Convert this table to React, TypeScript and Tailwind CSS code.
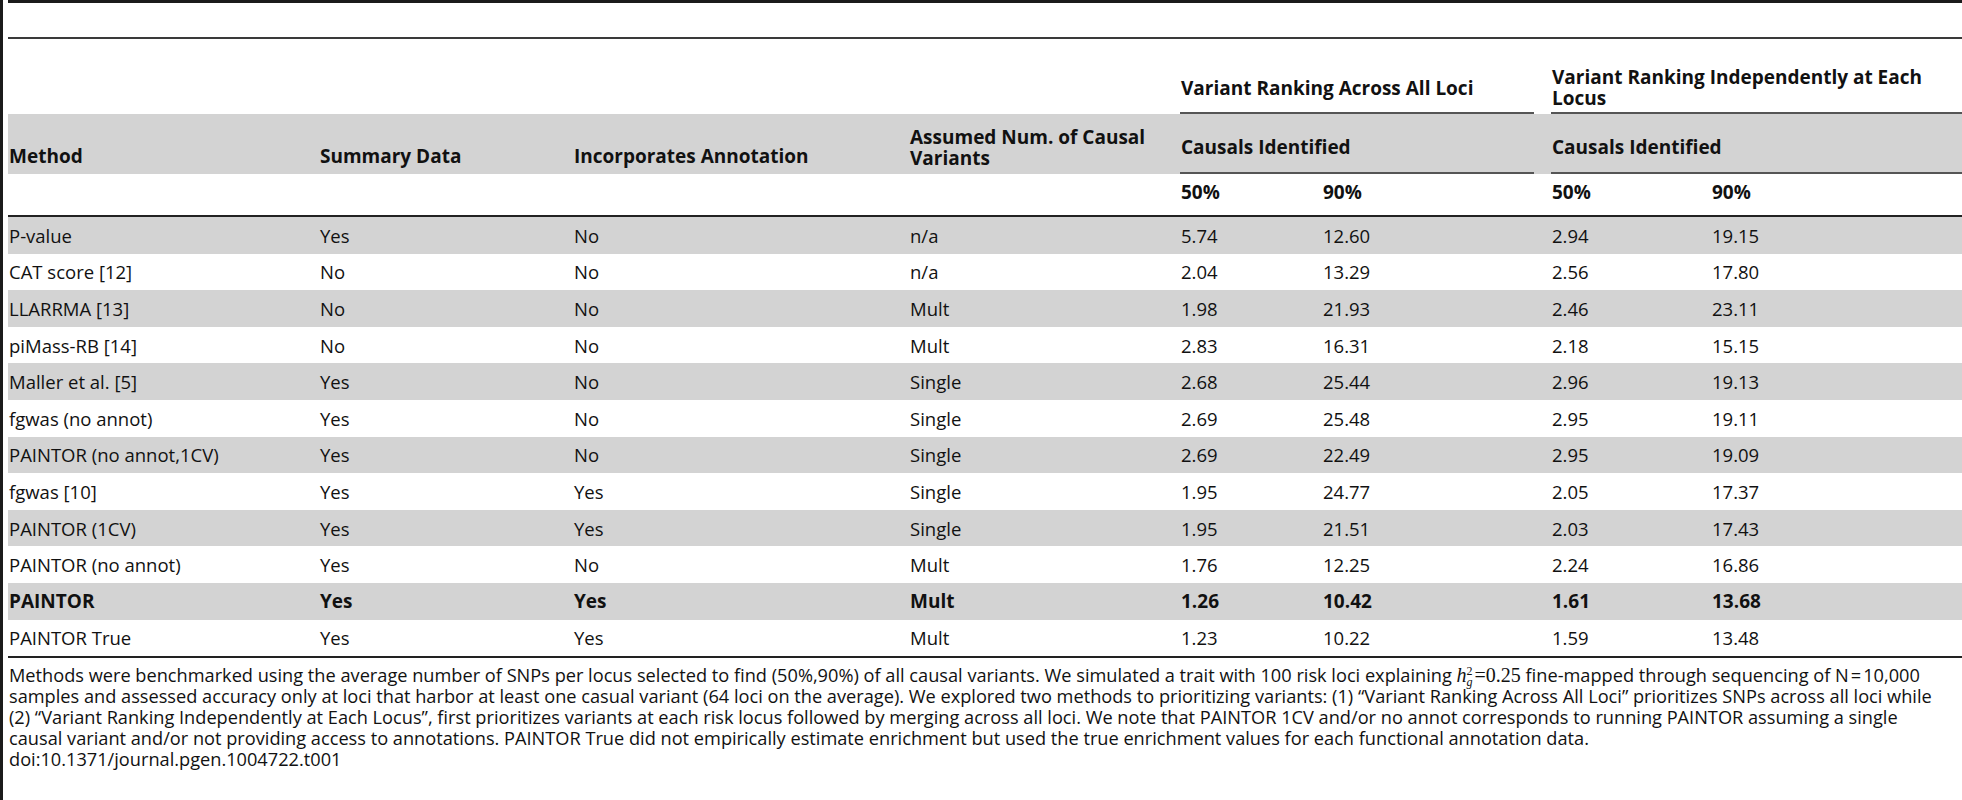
import clsx from 'clsx';

type Row = {
  cells: string[];
  bold?: boolean;
};

const COLS = [
  'w-[311px]',
  'w-[254px]',
  'w-[336px]',
  'w-[271px]',
  'w-[142px]',
  'w-[229px]',
  'w-[160px]',
  'flex-1',
];

const rows: Row[] = [
  { cells: ['P-value', 'Yes', 'No', 'n/a', '5.74', '12.60', '2.94', '19.15'] },
  { cells: ['CAT score [12]', 'No', 'No', 'n/a', '2.04', '13.29', '2.56', '17.80'] },
  { cells: ['LLARRMA [13]', 'No', 'No', 'Mult', '1.98', '21.93', '2.46', '23.11'] },
  { cells: ['piMass-RB [14]', 'No', 'No', 'Mult', '2.83', '16.31', '2.18', '15.15'] },
  { cells: ['Maller et al. [5]', 'Yes', 'No', 'Single', '2.68', '25.44', '2.96', '19.13'] },
  { cells: ['fgwas (no annot)', 'Yes', 'No', 'Single', '2.69', '25.48', '2.95', '19.11'] },
  { cells: ['PAINTOR (no annot,1CV)', 'Yes', 'No', 'Single', '2.69', '22.49', '2.95', '19.09'] },
  { cells: ['fgwas [10]', 'Yes', 'Yes', 'Single', '1.95', '24.77', '2.05', '17.37'] },
  { cells: ['PAINTOR (1CV)', 'Yes', 'Yes', 'Single', '1.95', '21.51', '2.03', '17.43'] },
  { cells: ['PAINTOR (no annot)', 'Yes', 'No', 'Mult', '1.76', '12.25', '2.24', '16.86'] },
  { cells: ['PAINTOR', 'Yes', 'Yes', 'Mult', '1.26', '10.42', '1.61', '13.68'], bold: true },
  { cells: ['PAINTOR True', 'Yes', 'Yes', 'Mult', '1.23', '10.22', '1.59', '13.48'] },
];

function DataRow({ row, shaded }: { row: Row; shaded: boolean }) {
  return (
    <div
      className={clsx(
        'flex h-[36.6px] items-center',
        shaded && 'bg-[#d3d3d3]',
        row.bold && 'text-[19px] font-bold',
      )}
    >
      {row.cells.map((cell, i) => (
        <div key={i} className={clsx(COLS[i], 'whitespace-nowrap pl-[1px]')}>
          {cell}
        </div>
      ))}
    </div>
  );
}

// h_g^2 = 0.25, set in serif like the journal's inline math
function Heritability() {
  return (
    <span className="font-['Liberation_Serif',serif] text-[20px]">
      <i>h</i>
      <span className="inline-flex flex-col align-[7px] text-[12px] leading-[11px]">
        <span>2</span>
        <i>g</i>
      </span>
      <span className="ml-[2px]">=0.25</span>
    </span>
  );
}

export default function App() {
  return (
    <div className="min-h-[800px] border-l-[3px] border-[#1b1b1b] bg-white pl-[5px] font-['Open_Sans',sans-serif] text-[18.5px] leading-[21px] text-[#111]">
      <div className="h-[3px] bg-[#1b1b1b]" />
      <div className="h-[34px]" />
      <div className="h-[2px] bg-[#3a3a3a]" />

      {/* group headings */}
      <div className="flex h-[75px] text-[19px] leading-[21px] font-bold">
        <div className="w-[1172px]" />
        <div className="flex w-[371px] flex-col">
          <div className="flex flex-1 items-center pt-[25px] pl-[1px]">Variant Ranking Across All Loci</div>
          <div className="mr-[17px] h-[2px] bg-[#555]" />
        </div>
        <div className="flex flex-1 flex-col">
          <div className="flex flex-1 items-center pt-[25px] pl-[1px]">
            <div>
              Variant Ranking Independently at Each
              <br />
              Locus
            </div>
          </div>
          <div className="h-[2px] bg-[#555]" />
        </div>
      </div>

      {/* column headings */}
      <div className="flex h-[60px] bg-[#d3d3d3] text-[19px] leading-[21px] font-bold">
        <div className={clsx(COLS[0], 'self-end pb-[7px] pl-[1px]')}>Method</div>
        <div className={clsx(COLS[1], 'self-end pb-[7px] pl-[1px]')}>Summary Data</div>
        <div className={clsx(COLS[2], 'self-end pb-[7px] pl-[1px]')}>Incorporates Annotation</div>
        <div className={clsx(COLS[3], 'self-end pb-[5px] pl-[1px]')}>
          Assumed Num. of Causal
          <br />
          Variants
        </div>
        <div className="flex w-[371px] flex-col justify-end">
          <div className="pb-[14px] pl-[1px]">Causals Identified</div>
          <div className="mr-[17px] h-[2px] bg-[#555]" />
        </div>
        <div className="flex flex-1 flex-col justify-end">
          <div className="pb-[14px] pl-[1px]">Causals Identified</div>
          <div className="h-[2px] bg-[#555]" />
        </div>
      </div>

      <div className="flex h-[41px] items-center pb-[4px] text-[19px] font-bold">
        <div className="w-[1172px]" />
        <div className={clsx(COLS[4], 'pl-[1px]')}>50%</div>
        <div className={clsx(COLS[5], 'pl-[1px]')}>90%</div>
        <div className={clsx(COLS[6], 'pl-[1px]')}>50%</div>
        <div className={clsx(COLS[7], 'pl-[1px]')}>90%</div>
      </div>
      <div className="h-[2px] bg-[#222]" />

      {rows.map((row, i) => (
        <DataRow key={row.cells[0]} row={row} shaded={i % 2 === 0} />
      ))}
      <div className="h-[2px] bg-[#222]" />

      <div className="whitespace-nowrap pt-[7px] pl-[1px] text-[18.2px] [&>div]:h-[21px]">
        <div>
          Methods were benchmarked using the average number of SNPs per locus selected to find (50%,90%) of all causal
          variants. We simulated a trait with 100 risk loci explaining <Heritability /> fine-mapped through sequencing
          of N<span className="mx-[2px]">=</span>10,000
        </div>
        <div>
          samples and assessed accuracy only at loci that harbor at least one casual variant (64 loci on the average).
          We explored two methods to prioritizing variants: (1) “Variant Ranking Across All Loci” prioritizes SNPs
          across all loci while
        </div>
        <div>
          (2) “Variant Ranking Independently at Each Locus”, first prioritizes variants at each risk locus followed by
          merging across all loci. We note that PAINTOR 1CV and/or no annot corresponds to running PAINTOR assuming a
          single
        </div>
        <div>
          causal variant and/or not providing access to annotations. PAINTOR True did not empirically estimate
          enrichment but used the true enrichment values for each functional annotation data.
        </div>
        <div>doi:10.1371/journal.pgen.1004722.t001</div>
      </div>
    </div>
  );
}
